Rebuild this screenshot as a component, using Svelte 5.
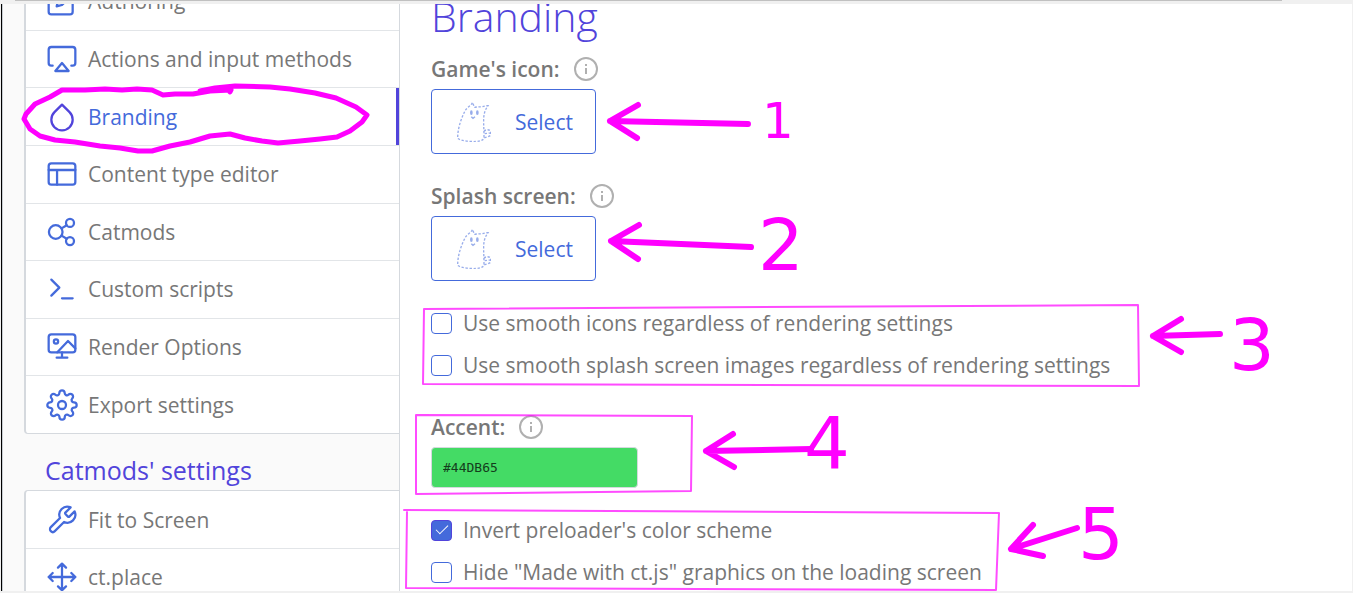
<script lang="ts">
  type NavItem = { label: string; icon: string; active?: boolean };

  const icons: Record<string, string> = {
    edit: '<path d="M11 4H4a2 2 0 0 0-2 2v14a2 2 0 0 0 2 2h14a2 2 0 0 0 2-2v-7"/><path d="M18.500 2.500a2.121 2.121 0 0 1 3 3L12 15l-4 1 1-4 9.500-9.500z"/>',
    airplay: '<path d="M5 17H4a2 2 0 0 1-2-2V5a2 2 0 0 1 2-2h16a2 2 0 0 1 2 2v10a2 2 0 0 1-2 2h-1"/><path d="M12 15l5 6H7z"/>',
    droplet: '<path d="M12 2.690l5.660 5.660a8 8 0 1 1-11.310 0z"/>',
    layout: '<rect x="2" y="4" width="20" height="16" rx="2"/><path d="M2 9h20M8.300 9v11"/>',
    share: '<circle cx="7.300" cy="12" r="5.100"/><circle cx="18" cy="5.200" r="3"/><circle cx="18" cy="18.800" r="3"/><path d="M11.700 9.300l3.800-2.400M11.700 14.700l3.800 2.400"/>',
    terminal: '<path d="M4 17l6-6-6-6M12 19h8"/>',
    render: '<rect x="2" y="2.500" width="20" height="13.500" rx="2"/><circle cx="7.500" cy="7.800" r="1.600"/><path d="M8.500 16l8-8.500L22 13M12 16v4M8 20h8"/>',
    settings: '<circle cx="12" cy="12" r="3"/><path d="M19.400 15a1.650 1.650 0 0 0 .33 1.820l.06.06a2 2 0 0 1 0 2.830 2 2 0 0 1-2.830 0l-.06-.06a1.650 1.650 0 0 0-1.820-.33 1.650 1.650 0 0 0-1 1.510V21a2 2 0 0 1-2 2 2 2 0 0 1-2-2v-.09A1.650 1.650 0 0 0 9 19.400a1.650 1.650 0 0 0-1.820.33l-.06.06a2 2 0 0 1-2.830 0 2 2 0 0 1 0-2.830l.06-.06a1.650 1.650 0 0 0 .33-1.820 1.650 1.650 0 0 0-1.510-1H3a2 2 0 0 1-2-2 2 2 0 0 1 2-2h.09A1.650 1.650 0 0 0 4.600 9a1.650 1.650 0 0 0-.33-1.820l-.06-.06a2 2 0 0 1 0-2.830 2 2 0 0 1 2.830 0l.06.06a1.650 1.650 0 0 0 1.820.33H9a1.650 1.650 0 0 0 1-1.510V3a2 2 0 0 1 2-2 2 2 0 0 1 2 2v.09a1.650 1.650 0 0 0 1 1.510 1.650 1.650 0 0 0 1.820-.33l.06-.06a2 2 0 0 1 2.830 0 2 2 0 0 1 0 2.830l-.06.06a1.650 1.650 0 0 0-.33 1.820V9a1.650 1.650 0 0 0 1.510 1H21a2 2 0 0 1 2 2 2 2 0 0 1-2 2h-.09a1.650 1.650 0 0 0-1.510 1z"/>',
    tool: '<path d="M14.700 6.300a1 1 0 0 0 0 1.400l1.600 1.600a1 1 0 0 0 1.400 0l3.770-3.770a6 6 0 0 1-7.940 7.940l-6.910 6.910a2.120 2.120 0 0 1-3-3l6.910-6.910a6 6 0 0 1 7.940-7.940l-3.760 3.760z"/>',
    move: '<path d="M5 9l-3 3 3 3M9 5l3-3 3 3M15 19l-3 3-3-3M19 9l3 3-3 3M2 12h20M12 2v20"/>'
  };

  const project: NavItem[] = [
    { label: 'Authoring', icon: 'edit' },
    { label: 'Actions and input methods', icon: 'airplay' },
    { label: 'Branding', icon: 'droplet', active: true },
    { label: 'Content type editor', icon: 'layout' },
    { label: 'Catmods', icon: 'share' },
    { label: 'Custom scripts', icon: 'terminal' },
    { label: 'Render Options', icon: 'render' },
    { label: 'Export settings', icon: 'settings' }
  ];
  const catmods: NavItem[] = [
    { label: 'Fit to Screen', icon: 'tool' },
    { label: 'ct.place', icon: 'move' }
  ];

  let smoothIcons = $state(false);
  let smoothSplash = $state(false);
  let invert = $state(true);
  let hideLogo = $state(false);
  let accent = $state('#44DB65');
</script>

{#snippet navRow(item: NavItem)}
  <li>
    <button class="nav-row" class:active={item.active} type="button">
      <svg class="icon" viewBox="0 0 24 24" aria-hidden="true">{@html icons[item.icon]}</svg>
      <span>{item.label}</span>
    </button>
  </li>
{/snippet}

{#snippet info()}
  <svg class="info" viewBox="0 0 24 24" aria-hidden="true">
    <circle cx="12" cy="12" r="11" />
    <path d="M12 11v6M12 7v2" />
  </svg>
{/snippet}

{#snippet cat()}
  <svg class="cat" viewBox="36 30 102 123" aria-hidden="true">
    <path d="M82 35C78 45 66 48 60 60C48 84 38 112 38 142C50 152 96 154 106 149C112 147 117 146 117 138C117 110 114 84 118 68C120 58 124 52 129 44C122 44 116 46 110 48C102 47 96 48 89 49Z" />
    <path d="M117 121C124 113 136 116 137 122V133C130 138 122 139 117 141M119 128L136 126" />
    <path class="nose" d="M79 77L84 82L90 77" />
    <ellipse cx="79" cy="65" rx="4" ry="7" />
    <ellipse cx="97" cy="65" rx="4" ry="7" />
  </svg>
{/snippet}

<div class="window">
  <div class="edge"></div>
  <div class="workspace">
    <nav class="sidebar" aria-label="Settings">
      <ul class="list project">
        {#each project as item}{@render navRow(item)}{/each}
      </ul>
      <h2>Catmods' settings</h2>
      <ul class="list">
        {#each catmods as item}{@render navRow(item)}{/each}
      </ul>
    </nav>

    <main>
      <h1>Branding</h1>
      <section>
        <div class="label" id="icon-label">Game's icon: {@render info()}</div>
        <button class="select" type="button" aria-describedby="icon-label">{@render cat()}<span>Select</span></button>
      </section>
      <section>
        <div class="label" id="splash-label">Splash screen: {@render info()}</div>
        <button class="select" type="button" aria-describedby="splash-label">{@render cat()}<span>Select</span></button>
      </section>
      <section class="checks">
        <label><input type="checkbox" bind:checked={smoothIcons} />Use smooth icons regardless of rendering settings</label>
        <label><input type="checkbox" bind:checked={smoothSplash} />Use smooth splash screen images regardless of rendering settings</label>
      </section>
      <section class="accent">
        <label class="label" for="accent">Accent: {@render info()}</label>
        <input id="accent" type="text" bind:value={accent} style:background={accent} />
      </section>
      <section class="checks">
        <label><input type="checkbox" bind:checked={invert} />Invert preloader's color scheme</label>
        <label><input type="checkbox" bind:checked={hideLogo} />Hide "Made with ct.js" graphics on the loading screen</label>
      </section>
    </main>
  </div>
  <div class="edge bottom"></div>

  <svg class="ink" width="1353" height="593" viewBox="0 0 1353 593">
    <path class="loop" d="M230 92L231 90L210 91L193 94L175 94L163 95L152 90L137 89L122 90L105 89L85 90L62 90L50 97L35 104L26 114L24 119L30 129L40 136L55 140L75 142L100 146L120 148L138 151L152 151L170 146L190 142L210 136L230 134L245 138L262 141L278 143L300 141L320 139L337 137L350 131L362 122L367 115L356 107L336 98L315 93L290 89L270 87L235 86L215 88L200 91" />
    <g class="arrow">
      <path d="M748 124L610 121M638 105L610 121L637 138" />
      <path d="M751 247L611 241M639 225L611 241L638 259" />
      <path d="M1220 334L1153 336M1181 319L1153 336L1181 352" />
      <path d="M811 449L706 451M733 434L706 451L734 467" />
      <path d="M1077 528L1011 549M1033 525L1011 549L1043 556" />
    </g>
    <g class="frame">
      <path d="M424 309L1138 305L1139 386L423 384Z" />
      <path d="M416 415L692 416L691 491L416 494Z" />
      <path d="M404 510L999 513L996 590L406 588L407 512" />
    </g>
    <text class="small" x="762" y="138">1</text>
    <text x="758" y="270">2</text>
    <text x="1229" y="370">3</text>
    <text x="804" y="468">4</text>
    <text x="1078" y="559">5</text>
  </svg>
</div>

<style>
  :global(body) {
    margin: 0;
    background: #f0f0f0;
  }
  .window {
    position: relative;
    display: flex;
    flex-direction: column;
    height: 100vh;
    overflow: hidden;
    font: 21px/28px "Open Sans", "Noto Sans", sans-serif;
    color: #777;
  }
  .edge {
    flex: none;
    height: 3px;
    margin: 0 71px 0 15px;
    border-top: 1px solid #c0c0c0;
  }
  .bottom {
    height: 2px;
    border: 0;
  }
  .workspace {
    flex: 1;
    min-height: 0;
    display: flex;
    margin: 0 1px;
    overflow: hidden;
    background: #fff;
    border-left: 1px solid #000;
  }
  .sidebar {
    box-sizing: border-box;
    flex: 0 0 398px;
    padding-left: 21px;
    background: #fafafa;
    border-left: 1px solid #c8cdd2;
    border-right: 1px solid #d5d9de;
  }
  .list {
    display: grid;
    grid-auto-rows: 1fr;
    margin: 0;
    padding: 0;
    list-style: none;
    background: #fff;
    border: 1px solid #d5d9de;
    border-left-width: 2px;
    border-right: 0;
    border-radius: 4px 0 0 4px;
  }
  .project {
    min-height: 461px;
    margin-top: -33px;
  }
  li {
    box-sizing: border-box;
    display: grid;
    min-height: 57px;
  }
  li + li {
    border-top: 1px solid #e2e5e8;
  }
  .nav-row {
    display: flex;
    align-items: center;
    gap: 10px;
    padding: 0 20px;
    border: 0;
    background: none;
    font: inherit;
    color: inherit;
    text-align: left;
  }
  .nav-row.active {
    color: #446adb;
    border-right: 3px solid #5144db;
  }
  .icon {
    flex: none;
    width: 32px;
    height: 32px;
    fill: none;
    stroke: #446adb;
    stroke-width: 1.7;
    stroke-linecap: round;
    stroke-linejoin: round;
  }
  .active .icon {
    stroke: #5144db;
  }
  h1,
  h2 {
    margin: 0;
    color: #5144db;
  }
  h2 {
    padding: 20px 21px 4px;
    font-size: 25px;
    line-height: 32px;
    font-weight: 400;
  }
  main {
    flex: 1;
    min-width: 0;
    padding-left: 31px;
  }
  h1 {
    margin: -16px 0 -17px;
    font-size: 41px;
    line-height: 56px;
    font-weight: 300;
  }
  section {
    margin-top: 28px;
  }
  .label {
    display: flex;
    align-items: center;
    gap: 14px;
    margin-bottom: 6px;
    font-weight: 600;
  }
  .info {
    width: 24px;
    height: 24px;
    fill: none;
    stroke: #b0b0b0;
    stroke-width: 2;
  }
  .select {
    box-sizing: border-box;
    display: flex;
    align-items: center;
    gap: 24px;
    height: 65px;
    padding: 0 22px 0 25px;
    border: 1px solid #446adb;
    border-radius: 4px;
    background: #fff;
    color: #446adb;
    font: inherit;
  }
  .cat {
    width: 34px;
    height: 41px;
    fill: none;
    stroke: #446adb;
    stroke-width: 4;
    stroke-dasharray: 7 5;
    opacity: 0.55;
  }
  .cat ellipse {
    fill: #446adb;
    stroke: none;
  }
  .nose {
    stroke-dasharray: none;
  }
  .checks {
    display: flex;
    flex-direction: column;
    align-items: flex-start;
    gap: 14px;
  }
  .checks label {
    display: flex;
    align-items: center;
    gap: 11px;
  }
  input[type="checkbox"] {
    appearance: none;
    box-sizing: border-box;
    display: grid;
    place-items: center;
    width: 21px;
    height: 21px;
    margin: 0;
    border: 1px solid #446adb;
    border-radius: 4px;
    background: #fff;
  }
  input[type="checkbox"]:checked {
    border-color: #5144db;
    background: #446adb;
  }
  input[type="checkbox"]:checked::before {
    content: "";
    width: 11px;
    height: 5px;
    margin-bottom: 4px;
    border: solid #fff;
    border-width: 0 0 1px 1px;
    transform: rotate(-45deg);
  }
  .accent {
    margin-top: 34px;
  }
  #accent {
    box-sizing: border-box;
    display: block;
    width: 207px;
    height: 41px;
    padding: 0 11px;
    border: 1px solid #d5d9de;
    border-radius: 4px;
    color: #143d1c;
    font: 13px "DejaVu Sans Mono", monospace;
  }
  .ink {
    position: absolute;
    top: 0;
    left: 0;
    pointer-events: none;
    fill: none;
    stroke: #f0f;
    stroke-linecap: round;
    stroke-linejoin: round;
  }
  .loop {
    stroke-width: 5;
  }
  .arrow {
    stroke-width: 6;
  }
  .frame {
    stroke-width: 2;
    opacity: 0.7;
  }
  .ink text {
    fill: #f0f;
    stroke: none;
    font: 72px "DejaVu Sans", sans-serif;
  }
  .ink .small {
    font-size: 50px;
  }
</style>
